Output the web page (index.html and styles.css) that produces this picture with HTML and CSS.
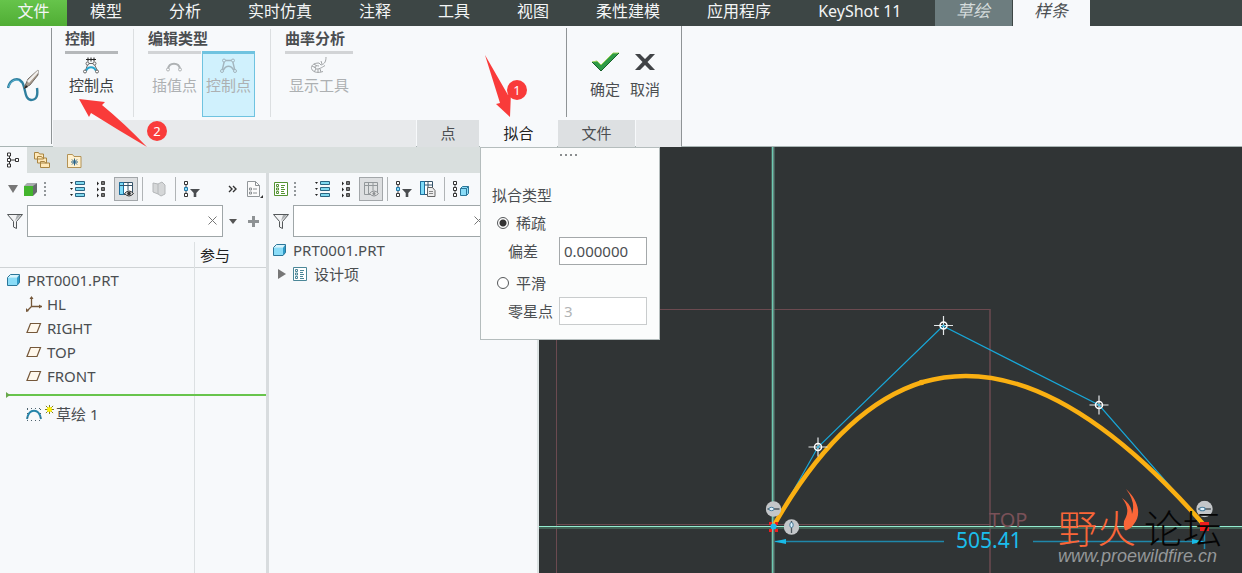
FILE: index.html
```html
<!DOCTYPE html>
<html lang="zh-CN">
<head>
<meta charset="utf-8">
<meta name="viewport" content="width=device-width, initial-scale=1">
<title>样条</title>
<link rel="stylesheet" href="styles.css">
</head>
<body>
<svg class="defs" aria-hidden="true">
  <symbol id="i-expand" viewBox="0 0 18 18">
    <path d="M1 2h3L2.500 4zM1 8h3l-1.500 2zM1 14h3l-1.500 2z" fill="#222"/>
    <path d="M6.500 1.500h9v3h-9zM6.500 7.500h9v3h-9zM6.500 13.500h9v3h-9z" fill="#7fd8ee" stroke="#2a6482"/>
  </symbol>
  <symbol id="i-collapse" viewBox="0 0 18 18">
    <path d="M4 1.500v4L6 3.500zM4 7.500v4l2-2zM4 13.500v4l2-2z" fill="#222"/>
    <path d="M8.500 1.500h3v3h-3zM8.500 7.500h3v3h-3zM8.500 13.500h3v3h-3z" fill="#777" stroke="#444"/>
  </symbol>
  <symbol id="i-columns" viewBox="0 0 18 18">
    <path d="M2.500 2.500h13v12h-13z" fill="#fff" stroke="#36546a"/>
    <path d="M2.500 2.500h4v12h-4z" fill="#7fdcf8" stroke="#1f6f9d"/>
    <path d="M2.500 5.500h13M11 2.500v8" stroke="#36546a" fill="none"/>
    <path d="M7.500 13.500q4.500-5 9 0q-4.500 5-9 0z" fill="#ddd" stroke="#333"/>
    <circle cx="12" cy="13.500" r="1.800" fill="#333"/>
  </symbol>
  <symbol id="i-columns-off" viewBox="0 0 18 18">
    <path d="M2.500 2.500h13v12h-13zM6.500 2.500v12M2.500 5.500h13M11 2.500v8" fill="#dfe1e2" stroke="#93989b"/>
    <path d="M7.500 13.500q4.500-5 9 0q-4.500 5-9 0z" fill="#e4e4e4" stroke="#8b8f92"/>
    <circle cx="12" cy="13.500" r="1.500" fill="#8b8f92"/>
  </symbol>
  <symbol id="i-treefilter" viewBox="0 0 18 18">
    <path d="M3 5v8" stroke="#444"/>
    <path d="M1.500 1.500h3v3h-3zM1.500 13.500h3v3h-3z" fill="#fff" stroke="#333"/>
    <path d="M1.500 7.500h3v3h-3z" fill="#8fe0fa" stroke="#2178a8"/>
    <path d="M7 9h10l-3.700 4v4h-2.600v-4z" fill="#4a4d50"/>
  </symbol>
  <symbol id="i-filter" viewBox="0 0 18 18">
    <path d="M1.500 2.500h15l-6 7v7l-3-1.500V9.500z" fill="#f2f3f4" stroke="#54585a"/>
    <path d="M9 9l6-6h-4z" fill="#a9adaf"/>
  </symbol>
  <symbol id="i-part" viewBox="0 0 16 16">
    <path d="M1.500 5.500L4.500 2.500h9l-2.500 3z" fill="#d6f4fd"/>
    <path d="M11 5.500l2.500-3v8l-2.500 3z" fill="#2f9bc8"/>
    <path d="M1.500 5.500H11v8H1.500z" fill="#8adcf7"/>
    <path d="M1.500 5.500L4.500 2.500h9v8l-2.500 3H1.500z" fill="none" stroke="#2b7699"/>
  </symbol>
  <symbol id="i-plane" viewBox="0 0 16 16">
    <path d="M4.500 3.500h10l-3.500 9h-10z" fill="#fff8ec" stroke="#75583a" stroke-width="1.200"/>
  </symbol>
  <symbol id="i-list" viewBox="0 0 16 16">
    <path d="M1.500 1.500h13v13h-13z" fill="#fff" stroke="currentColor"/>
    <path d="M3.500 3.500h2v2h-2zM3.500 7h2v2h-2zM3.500 10.500h2v2h-2zM8 4.500h4M8 6.500h3M8 8.500h4M8 10.500h3M8 12.500h4" fill="none" stroke="currentColor"/>
  </symbol>
  <symbol id="i-document" viewBox="0 0 18 18">
    <path d="M2.500 1.500h8l4 4v11h-12z" fill="#fbfbfb" stroke="#92979a"/>
    <path d="M10.500 1.500v4h4M8 9h4M8 13h4M4.500 8h2v2h-2zM4.500 12h2v2h-2z" fill="none" stroke="#8a8f92"/>
    <path d="M18 15v3h-3z" fill="#333"/>
  </symbol>
  <symbol id="i-cross" viewBox="-10 -10 20 20">
    <path d="M-9.500 0h19M0-9.500v19" stroke="#e4e8ea" stroke-width="1.200"/>
    <circle r="3.500" fill="none" stroke="#fff" stroke-width="1.500"/>
    <circle r="1" fill="#16a9d8"/>
  </symbol>
  <symbol id="i-constraint" viewBox="-8 -8 16 16">
    <circle r="7.700" fill="#c3c6c9"/>
    <path d="M-6 0H6" stroke="#4b555b" stroke-width="1.300"/>
    <ellipse cx="-2" rx="2.600" ry="1.700" fill="#dff1fc" stroke="#477c9b"/>
  </symbol>
</svg>

<nav class="menubar">
  <button class="menu-file">文件</button>
  <div class="menu-items">
    <button>模型</button><button>分析</button><button>实时仿真</button><button>注释</button><button>工具</button><button>视图</button><button>柔性建模</button><button>应用程序</button><button>KeyShot 11</button>
  </div>
  <button class="menu-context">草绘</button>
  <button class="menu-context is-active">样条</button>
</nav>

<header class="ribbon">
  <div class="ribbon-mode">
    <svg width="34" height="34" viewBox="0 0 34 34">
      <path d="M1 20C3 11 11 9 15 14C19 20 17 31 24 32C30 32 31 27 30 20" fill="none" stroke="#2f7f9e" stroke-width="2.400"/>
      <path d="M1.500 19C4 11 11 10 14 15" fill="none" stroke="#5cb8d8" stroke-width="1"/>
      <path d="M17 20l4-9L31 2v5l-8 10z" fill="#a89a8c" stroke="#716a64"/>
      <path d="M20 13l11-11v3L22 15z" fill="#f1efec"/>
      <path d="M17 21l2-4 2 2z" fill="#222"/>
    </svg>
  </div>
  <div class="ribbon-main">
    <div class="ribbon-groups">
      <section class="group group-control">
        <h2>控制</h2>
        <div class="group-tools">
          <button class="tool">
            <svg width="18" height="17" viewBox="0 0 18 17">
              <path d="M3 2.500h10M5 .5v4M8 .5v4M11 .5v4" stroke="#222"/>
              <path d="M2 15L5 6.500h6L15 15" fill="none" stroke="#666"/>
              <path d="M3 14C5 9 11 9 13 14" fill="none" stroke="#28a6ce" stroke-width="2"/>
              <g fill="#fff" stroke="#666"><circle cx="4.500" cy="6.500" r="1.500"/><circle cx="11.500" cy="6.500" r="1.500"/><circle cx="2" cy="14.500" r="1.500"/><circle cx="14" cy="14.500" r="1.500"/></g>
            </svg>
            <span>控制点</span>
          </button>
        </div>
      </section>
      <section class="group group-type">
        <h2>编辑类型</h2>
        <div class="group-tools">
          <button class="tool" disabled>
            <svg width="18" height="17" viewBox="0 0 18 17">
              <path d="M2 12C3 5 13 5 14 12" fill="none" stroke="#aeb2b4" stroke-width="2"/>
              <g fill="#f7f9fa" stroke="#b0b3b5"><circle cx="2" cy="12.500" r="1.500"/><circle cx="14" cy="12.500" r="1.500"/></g>
            </svg>
            <span>插值点</span>
          </button>
          <button class="tool is-selected" disabled>
            <svg width="18" height="17" viewBox="0 0 18 17">
              <path d="M2 14L4.500 3.500h8L15 14M3.500 13C6 8 11 8 13.500 13" fill="none" stroke="#a3b5be" stroke-width="1.400"/>
              <g fill="#d3f1fd" stroke="#a3b5be"><circle cx="4" cy="3.500" r="1.500"/><circle cx="13" cy="3.500" r="1.500"/><circle cx="2" cy="14" r="1.500"/><circle cx="15" cy="14" r="1.500"/></g>
            </svg>
            <span>控制点</span>
          </button>
        </div>
      </section>
      <section class="group group-curvature">
        <h2>曲率分析</h2>
        <div class="group-tools">
          <button class="tool" disabled>
            <svg width="18" height="17" viewBox="0 0 18 17">
              <path d="M9 6C3 6 1 9 1.500 11.500C3 16 9 16 13 14.500M9 9C5 8 4 10 5.500 11.500C8 13 12 10.500 15 8.500M2 9l4 2M4 7l3 2M4 15l2-3M8 15.500V12M11 15l-1-3M9 6l2 2c4-1 5-4 5-8M12 7l-1-3" fill="none" stroke="#a2a5a7"/>
            </svg>
            <span>显示工具</span>
          </button>
        </div>
      </section>
      <section class="apply">
        <button class="apply-button">
          <svg width="30" height="22" viewBox="0 0 30 22">
            <path d="M2 11l5-1 4 4L23 2h6L11 20z" fill="#2f9b47"/>
            <path d="M2 11l5-1 4 4L23 2h6" fill="none" stroke="#9bd25a"/>
            <path d="M29 2L11 20 2 11" fill="none" stroke="#17602b"/>
          </svg>
          <span>确定</span>
        </button>
        <button class="apply-button">
          <svg width="30" height="22" viewBox="0 0 30 22"><path d="M5 3h5l5 5 5-5h5l-7.500 8 7.500 8h-5l-5-5-5 5H5l7.500-8z" fill="#404346"/></svg>
          <span>取消</span>
        </button>
      </section>
    </div>
    <div class="ribbon-tabs">
      <div class="strip strip-fill"></div>
      <button class="ribbon-tab tab-point">点</button>
      <div class="tab-holder">
        <button class="ribbon-tab is-open">拟合</button>
        <form class="fit-panel">
          <div class="grip"><i></i><i></i><i></i><i></i></div>
          <h3>拟合类型</h3>
          <label class="choice"><input type="radio" name="fit" checked>稀疏</label>
          <div class="field"><label for="deviation">偏差</label><input id="deviation" type="text" value="0.000000"></div>
          <label class="choice choice-second"><input type="radio" name="fit">平滑</label>
          <div class="field"><label for="odd-points">零星点</label><input id="odd-points" type="text" value="3" disabled></div>
        </form>
      </div>
      <button class="ribbon-tab tab-file">文件</button>
      <div class="strip strip-end"></div>
    </div>
  </div>
  <svg class="callout callout-fit" width="46" height="64" viewBox="484 53 46 64">
    <path d="M485 55L508 95l3-3-1 25-14-13 4-1z" fill="#f93b3a"/>
    <circle cx="517" cy="90" r="10" fill="#f93b3a"/>
    <text x="517" y="95">1</text>
  </svg>
  <svg class="callout callout-control" width="92" height="50" viewBox="78 98 92 50">
    <path d="M79 99l26 3-3 3q22 18 45 42Q118 130 91 113l-2 4z" fill="#f93b3a"/>
    <circle cx="157" cy="131" r="10" fill="#f93b3a"/>
    <text x="157" y="136">2</text>
  </svg>
</header>

<main class="workspace">
  <div class="sidebar">
    <div class="panel-tabs">
      <button class="panel-tab is-active" aria-label="模型树">
        <svg width="16" height="18" viewBox="0 0 16 18"><path d="M3.500 4v10M5 9h6" stroke="#333"/><path d="M1.500 2h3v3h-3zM1.500 7.500h3v3h-3zM1.500 13h3v3h-3zM9.500 7.500h3v3h-3z" fill="#fff" stroke="#333"/></svg>
      </button>
      <button class="panel-tab" aria-label="文件夹浏览器">
        <svg width="18" height="18" viewBox="0 0 18 18" fill="#ffe8b8" stroke="#a98542"><path d="M.5 1.500h4l1 1.500h4v5h-9zM3.500 5.500h4l1 1.500h4v5h-9zM6.500 10.500h4l1 1.500h4v4.500h-9z"/></svg>
      </button>
      <button class="panel-tab" aria-label="收藏夹">
        <svg width="18" height="18" viewBox="0 0 18 18"><path d="M1.500 3.500h5l1.500 2h7v11h-13.500z" fill="#fff1cf" stroke="#b39255"/><path d="M8.500 7.500v7M5 11h7M6 8.500l5 5M11 8.500l-5 5" stroke="#27628a"/></svg>
      </button>
    </div>
    <div class="panels">
      <section class="panel panel-tree">
        <div class="toolbar">
          <button class="tb-caret" aria-label="显示"><svg width="10" height="8" viewBox="0 0 10 8"><path d="M0 0h10L5 8z" fill="#777"/></svg></button>
          <button class="tb-cube" aria-label="模型"><svg width="16" height="16" viewBox="0 0 16 16"><path d="M2 5l3-3h10l-3 3z" fill="#a8acae"/><path d="M11 5l4-3v9l-4 4z" fill="#666b6d"/><path d="M2 5h9v10H2z" fill="#43b52d"/></svg></button>
          <i class="dots"></i>
          <button class="tb-first" aria-label="全部展开"><svg><use href="#i-expand"/></svg></button>
          <button aria-label="全部折叠"><svg><use href="#i-collapse"/></svg></button>
          <button class="is-pressed" aria-label="列显示"><svg><use href="#i-columns"/></svg></button>
          <i class="rule"></i>
          <button aria-label="预览" disabled><svg viewBox="0 0 18 18"><path d="M3 3l5 1v10l-5-2zM8 4l4-2 3 3v9l-4 2-3-2" fill="#d5d7d8" stroke="#b4b7b9"/></svg></button>
          <i class="rule"></i>
          <button aria-label="树过滤器"><svg><use href="#i-treefilter"/></svg></button>
          <button class="tb-more" aria-label="更多"><svg viewBox="0 0 18 18"><path d="M6 6l3 3-3 3M10 6l3 3-3 3" fill="none" stroke="#333" stroke-width="1.400"/></svg></button>
          <button class="tb-settings" aria-label="设置"><svg><use href="#i-document"/></svg></button>
        </div>
        <div class="search">
          <svg class="search-icon"><use href="#i-filter"/></svg>
          <div class="search-box"><input type="text" aria-label="过滤模型树"><button aria-label="清除"><svg width="9" height="9" viewBox="0 0 9 9"><path d="M.5.5l8 8M8.500.5l-8 8" stroke="#777"/></svg></button></div>
          <button class="search-caret" aria-label="选项"><svg width="8" height="5" viewBox="0 0 8 5"><path d="M0 0h8L4 5z" fill="#555"/></svg></button>
          <button class="search-add" aria-label="添加"><svg width="11" height="11" viewBox="0 0 11 11"><path d="M4 0h3v4h4v3H7v4H4V7H0V4h4z" fill="#8e9294"/></svg></button>
        </div>
        <div class="tree-table">
          <div class="tree-column">
            <div class="tree-head"></div>
            <ul class="tree">
              <li><svg><use href="#i-part"/></svg>PRT0001.PRT</li>
              <li class="child"><svg viewBox="0 0 16 16"><path d="M5.500 1v9.500H16M5.500 10.500L1 15" fill="none" stroke="#75583a" stroke-width="1.300"/><path d="M5.500 0l2 3h-4zM16 10.500l-3-2v4zM0 16v-4l3 3z" fill="#75583a"/></svg>HL</li>
              <li class="child"><svg><use href="#i-plane"/></svg>RIGHT</li>
              <li class="child"><svg><use href="#i-plane"/></svg>TOP</li>
              <li class="child"><svg><use href="#i-plane"/></svg>FRONT</li>
            </ul>
          </div>
          <div class="tree-column column-value"><div class="tree-head">参与</div></div>
        </div>
        <div class="insert-line"></div>
        <div class="tree-table tree-rest">
          <div class="tree-column">
            <ul class="tree">
              <li class="child sketch"><svg viewBox="0 0 16 16"><path d="M1 13C3 2 13 2 15 13" fill="none" stroke="#2685aa" stroke-width="2"/><path d="M1 2.500h15M1 14.500h15M1.500 3v12M14.500 3v12" stroke="#4d626d" stroke-dasharray="1 3"/></svg><svg class="spark" viewBox="0 0 10 10"><path d="M5 0v10M0 5h10M1 1l8 8M9 1L1 9" stroke="#776f00"/><path d="M2.500 2.500h5v5h-5z" fill="#fff200"/></svg>草绘 1</li>
            </ul>
          </div>
          <div class="tree-column column-value"></div>
        </div>
      </section>
      <section class="panel panel-design">
        <div class="toolbar">
          <button class="tb-list" aria-label="设计树"><svg class="green"><use href="#i-list"/></svg></button>
          <i class="dots"></i>
          <button class="tb-second" aria-label="全部展开"><svg><use href="#i-expand"/></svg></button>
          <button aria-label="全部折叠"><svg><use href="#i-collapse"/></svg></button>
          <button class="is-pressed" aria-label="列显示" disabled><svg><use href="#i-columns-off"/></svg></button>
          <i class="rule"></i>
          <button aria-label="树过滤器"><svg><use href="#i-treefilter"/></svg></button>
          <button aria-label="树列"><svg viewBox="0 0 18 18"><path d="M1.500 1.500h12v13h-12zM1.500 5h12M9 1.500V9" fill="#fff" stroke="#36546a"/><path d="M1.500 1.500h4v13h-4z" fill="#7fdcf8" stroke="#1f6f9d"/><path d="M8.500 7.500h5l2.500 3v6H8.500z" fill="#eee" stroke="#666"/><path d="M10 11.500h4M10 13.500h4" stroke="#888"/></svg></button>
          <i class="rule"></i>
          <button aria-label="显示模型"><svg viewBox="0 0 18 18"><path d="M3 3v12" stroke="#444"/><path d="M1.500 1.500h3v3h-3zM1.500 7.500h3v3h-3zM1.500 13.500h3v3h-3z" fill="#fff" stroke="#333"/><path d="M8.500 8.500l2-2h6v7l-2 2h-6z" fill="#8adcf7" stroke="#2b7699"/><path d="M8.500 8.500h6v7M14.500 8.500l2-2" fill="none" stroke="#2b7699"/></svg></button>
        </div>
        <div class="search">
          <svg class="search-icon"><use href="#i-filter"/></svg>
          <div class="search-box"><input type="text" aria-label="过滤设计树"><button aria-label="清除"><svg width="9" height="9" viewBox="0 0 9 9"><path d="M.5.5l8 8M8.500.5l-8 8" stroke="#777"/></svg></button></div>
        </div>
        <ul class="tree">
          <li><svg><use href="#i-part"/></svg>PRT0001.PRT</li>
          <li class="design-item"><svg class="twisty" viewBox="0 0 8 10"><path d="M0 0l8 5-8 5z" fill="#777"/></svg><svg class="teal"><use href="#i-list"/></svg>设计项</li>
        </ul>
      </section>
    </div>
  </div>

  <svg class="canvas" viewBox="539 147 703 426" preserveAspectRatio="xMinYMin slice">
    <g fill="none" stroke="#6b4a50" stroke-width="1">
      <path d="M556.500 573V309.500H990M556 524.500h434"/>
      <path d="M990 309v264" stroke-width="1.500"/>
    </g>
    <path d="M773 147v426" stroke="#61877f" stroke-width="3"/>
    <path d="M772.500 147v426" stroke="#6cc9b0"/>
    <path d="M539 528h703" stroke="#47705f" stroke-width="1.500"/>
    <path d="M539 526.500h703" stroke="#93ecd0"/>
    <text class="plane-name" x="989" y="527">TOP</text>
    <path d="M775 541.500h169M1033 541.500h171M1204.500 525v24" stroke="#1f87ab" stroke-width="1.500"/>
    <path d="M774 541.500l12-2.500v5zM1204 541.500l-12-2.500v5z" fill="#19bbe8"/>
    <text class="dimension" x="956" y="548">505.41</text>
    <path d="M773 527L818 447 943 326 1099 405 1204 525" fill="none" stroke="#18a7d8" stroke-width="1.200"/>
    <path d="M773 527C818 447 868 399 923 382C1005 358 1099 405 1204 525" fill="none" stroke="#fab012" stroke-width="4.500"/>
    <circle cx="921.500" cy="382.500" r="2.800" fill="#fab012"/>
    <use href="#i-cross" x="808" y="437" width="20" height="20"/>
    <use href="#i-cross" x="933.500" y="315.500" width="20" height="20"/>
    <use href="#i-cross" x="1089" y="395" width="20" height="20"/>
    <g fill="#ee1d1d"><path d="M769 522h3v3h-3zM775 522h3v3h-3zM769 529h3v3h-3zM775 529h3v3h-3zM1200 522h9v9h-9z"/></g>
    <circle cx="773.500" cy="526.500" r="3" fill="#1eb8ec"/>
    <use href="#i-constraint" x="765.500" y="501" width="16" height="16"/>
    <use href="#i-constraint" x="783.500" y="519" width="16" height="16" transform="rotate(90 791.500 527)"/>
    <use href="#i-constraint" x="1196" y="500.500" width="17" height="17"/>
    <text class="brand brand-fire" x="1058" y="543">野火</text>
    <text class="brand brand-forum" x="1144" y="543">论坛</text>
    <path d="M1126 489C1138 500 1142 514 1134 524Q1130 530 1125 530Q1122 523 1126 517Q1130 508 1122 498Q1132 505 1132 514Q1136 502 1126 489z" fill="#fa6638"/>
    <text class="site" x="1058" y="562">www.proewildfire.cn</text>
  </svg>
</main>
</body>
</html>
```
FILE: styles.css
```css
* { box-sizing: border-box; }

body {
  margin: 0;
  min-height: 100vh;
  display: flex;
  flex-direction: column;
  font: 15px/24px "Noto Sans", "Noto Sans CJK SC", sans-serif;
  color: #4b4e51;
  background: #f7f9fb;
  overflow-x: hidden;
}

button, input { font: inherit; color: inherit; }
button { padding: 0; border: 0; background: none; white-space: nowrap; }
h2, h3, ul { margin: 0; padding: 0; }
svg { display: block; flex: none; }
.defs { position: absolute; width: 0; height: 0; }

/* Menu bar */
.menubar {
  display: flex;
  height: 26px;
  background: #3d4645;
  color: #f3f5f5;
  font-size: 16px;
}
.menubar button { padding-bottom: 4px; line-height: 22px; }
.menubar .menu-file { width: 67px; background: linear-gradient(#66c44b, #50ad34); }
.menu-items { display: flex; gap: 47px; padding: 0 33px 0 23px; }
.menubar .menu-context {
  width: 77px;
  margin-right: 1px;
  background: #6d7d7f;
  color: #d5dcdc;
  font-size: 17px;
  font-style: italic;
}
.menubar .menu-context.is-active { background: #f7f9fb; color: #4b4e51; }

/* Ribbon */
.ribbon {
  position: relative;
  z-index: 2;
  display: flex;
  height: 121px;
  background: #f7f9fb;
  border-bottom: 1px solid #a9b5b4;
}
.ribbon-mode {
  width: 52px;
  margin: 2px 0;
  padding: 40px 0 0 7px;
  border-right: 1px solid #8f9496;
}
.ribbon-main { display: flex; flex-direction: column; width: 630px; border-right: 1px solid #8f9496; }
.ribbon-groups { display: flex; flex: 1; }
.group { margin: 3px 0; padding-left: 14px; border-right: 1px solid #dcdfe1; }
.group-control { width: 82px; padding-left: 13px; }
.group-type { width: 137px; }
.group-curvature { flex: 1; border: 0; }
.group h2 { height: 22px; font-size: 15px; line-height: 18px; font-weight: 700; color: #4b4e51; }
.group-tools { display: flex; gap: 1px; }
.tool {
  display: flex;
  flex-direction: column;
  align-items: center;
  min-width: 53px;
  height: 66px;
  padding-top: 3px;
  border-top: 3px solid #b5b8ba;
  color: #3c3f42;
  line-height: 22px;
}
.tool:disabled { border-color: #d2d4d6; color: #adb0b2; }
.group-curvature .tool { width: 68px; }
.tool.is-selected:disabled {
  padding-top: 3px;
  border: 1px solid #6fc3e0;
  border-top-width: 3px;
  background: #d0f1fd;
}
.apply {
  display: flex;
  justify-content: center;
  gap: 10px;
  width: 115px;
  margin: 2px 0 3px;
  padding: 23px 1px 0 3px;
  border-left: 1px solid #8f9496;
}
.apply-button { display: flex; flex-direction: column; align-items: center; gap: 5px; height: 50px; line-height: 22px; }

.ribbon-tabs { display: flex; gap: 1px; height: 27px; padding-left: 1px; }
.strip { background: #e8eaec; }
.strip-fill { flex: 1; }
.strip-end { width: 45px; }
.ribbon-tab { height: 27px; padding-bottom: 2px; background: #dde0e2; }
.tab-point { width: 62px; }
.tab-file { width: 77px; }
.tab-holder { position: relative; width: 77px; }
.ribbon-tab.is-open { width: 100%; background: #f7f9fb; color: #222; }

.fit-panel {
  position: absolute;
  top: 100%;
  left: 0;
  width: 180px;
  padding: 0 12px 14px 11px;
  background: #fbfcfc;
  border: 1px solid #b5bdbd;
  line-height: 28px;
}
.grip { display: flex; justify-content: center; gap: 3px; height: 33px; padding: 6px 2px 0 0; }
.grip i { width: 2px; height: 2px; background: #8a8d8f; }
.fit-panel h3 { font-size: 15px; font-weight: 400; }
.choice { display: flex; align-items: center; gap: 7px; height: 28px; padding-left: 5px; }
.choice-second { margin-top: 4px; }
.choice input {
  appearance: none;
  width: 12px;
  height: 12px;
  margin: 0;
  border: 1px solid #55585a;
  border-radius: 50%;
  background: #fff;
}
.choice input:checked { background: radial-gradient(circle, #333 3px, #fff 4px); }
.field { display: flex; justify-content: space-between; padding-left: 16px; }
.field input { width: 88px; height: 28px; padding: 0 4px; border: 1px solid #a4a8aa; background: #fff; }
.field input:disabled { border-color: #c9cccd; color: #b2b4b5; }

.callout { position: absolute; pointer-events: none; }
.callout text { fill: #fff; font-size: 13px; text-anchor: middle; }
.callout-fit { left: 484px; top: 27px; }
.callout-control { left: 78px; top: 72px; }

/* Workspace */
.workspace { flex: 1; display: flex; min-height: 426px; }
.sidebar { display: flex; flex-direction: column; width: 539px; flex: none; border-right: 2px solid #dce3e3; }
.panel-tabs { display: flex; height: 26px; background: #d9dfde; }
.panel-tab { display: flex; align-items: center; justify-content: center; width: 32px; }
.panel-tab.is-active { width: 27px; background: #f7f9fb; }
.panels { display: flex; flex: 1; }
.panel { display: flex; flex-direction: column; }
.panel-tree { width: 269px; border-right: 3px solid #d8dcde; }
.panel-design { flex: 1; }

.toolbar { display: flex; align-items: center; height: 32px; }
.toolbar button { display: flex; align-items: center; justify-content: center; width: 24px; height: 24px; }
.toolbar button svg { width: 18px; height: 18px; }
.toolbar .is-pressed { background: #dddfe1; border: 1px solid #a3a7aa; }
.toolbar .tb-caret { width: 10px; margin-left: 8px; }
.toolbar .tb-caret svg { width: 10px; height: 8px; }
.toolbar .tb-cube { width: 24px; }
.toolbar .tb-cube svg { width: 16px; height: 16px; }
.toolbar .tb-first { margin-left: 20px; }
.toolbar .tb-second { margin-left: 15px; }
.toolbar .tb-more { margin-left: auto; width: 20px; }
.toolbar .tb-list { width: 20px; margin-left: 2px; }
.toolbar .tb-list svg { width: 16px; height: 16px; }
.dots { width: 2px; height: 14px; margin-left: 2px; background: repeating-linear-gradient(#92979a 0 2px, transparent 2px 4px); }
.panel-design .dots { margin-left: 3px; }
.rule { width: 1px; height: 24px; margin: 0 4px; background: #b0b4b6; }
.green { color: #549333; }
.teal { color: #4b8798; }

.search { display: flex; align-items: center; height: 32px; }
.search-icon { width: 18px; height: 18px; margin: 0 3px 0 6px; }
.search-box { position: relative; display: flex; width: 196px; }
.search-box input { width: 100%; height: 32px; padding: 0 24px 0 6px; border: 1px solid #9fa6a8; background: #fff; }
.search-box button { position: absolute; right: 6px; top: 11px; }
.search-caret { margin-left: 6px; }
.search-add { margin-left: 11px; }
.panel-design .search-icon { margin: 0 3px; }

.tree-table { display: flex; padding-top: 5px; }
.tree-column { flex: 1; }
.column-value { flex: 0 0 72px; border-left: 1px solid #dce0e2; color: #222; }
.tree-head { height: 26px; padding: 1px 5px 0; border-bottom: 1px solid #cfd3d5; }
.tree { list-style: none; }
.tree li { display: flex; align-items: center; height: 24px; gap: 5px; padding-left: 6px; }
.tree li svg { width: 16px; height: 16px; }
.tree .child { padding-left: 26px; }
.panel-tree .tree { padding-bottom: 6px; }
.insert-line { position: relative; height: 2px; margin-left: 6px; background: #68c44c; }
.insert-line::before {
  content: "";
  position: absolute;
  left: 0;
  top: -2px;
  border: 3px solid transparent;
  border-left: 4px solid #68a84c;
}
.tree-rest { flex: 1; padding: 0; }
.tree-rest .tree { padding-top: 6px; }
.tree .sketch { gap: 2px; }
.tree .sketch .spark { width: 9px; height: 9px; margin: 0 0 10px 1px; }
.panel-design .tree { padding-top: 1px; }
.panel-design .tree li { padding-left: 3px; }
.panel-design .tree .design-item { padding-left: 9px; gap: 6px; }
.panel-design .tree .twisty { width: 8px; height: 10px; }

/* Drawing area */
.canvas { flex: 1; width: 0; min-height: 426px; background: #303435; }
.plane-name { font-size: 20px; fill: #795158; }
.dimension { font-size: 21px; fill: #1bbdec; }
.brand { font-size: 39px; font-weight: 300; }
.brand-fire { fill: #fa6638; }
.brand-forum { fill: #050505; }
.site { font: italic 18px "Liberation Sans", sans-serif; fill: #949799; }
```
